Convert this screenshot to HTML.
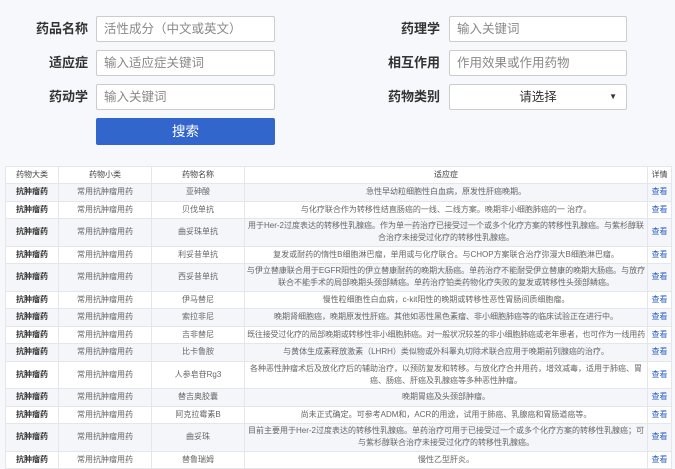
<!DOCTYPE html>
<html><head><meta charset="utf-8"><style>
*{margin:0;padding:0;box-sizing:border-box}
body{width:675px;height:469px;overflow:hidden;background:#f6f8fb;font-family:"Liberation Sans","Noto Sans CJK SC",sans-serif;position:relative}
.lb{position:absolute;font-size:13px;font-weight:bold;color:#333;text-align:right;width:90px;line-height:26px}
.in{position:absolute;height:26px;background:#fff;border:1px solid #ccc;border-radius:2px;font-size:12.5px;color:#888;line-height:24px;padding-left:7px}
.btn{position:absolute;left:96px;top:118px;width:179px;height:27px;background:#3366cc;border-radius:2px;color:#fff;font-size:13.5px;text-align:center;line-height:27px}
table{position:absolute;left:5px;top:166px;width:666px;border-collapse:collapse;table-layout:fixed;background:#fff;font-size:8px;color:#666}
td,th{border:1px solid #e3e6ea;text-align:center;line-height:12px;padding:0 1px}
th{font-weight:normal;color:#444;height:17px}
tr.s{height:17.5px}tr.t{height:27.5px}
tbody tr:nth-child(odd){background:#f4f6f9}
td:first-child{font-weight:bold;color:#333}
td:last-child{color:#2a5fc8}
</style></head><body>
<div class="lb" style="left:-2px;top:16px">药品名称</div>
<div class="in" style="left:96px;top:16px;width:179px">活性成分（中文或英文）</div>
<div class="lb" style="left:-2px;top:50px">适应症</div>
<div class="in" style="left:96px;top:50px;width:179px">输入适应症关键词</div>
<div class="lb" style="left:-2px;top:84px">药动学</div>
<div class="in" style="left:96px;top:84px;width:179px">输入关键词</div>
<div class="btn">搜索</div>
<div class="lb" style="left:350px;top:16px">药理学</div>
<div class="in" style="left:449px;top:16px;width:178px">输入关键词</div>
<div class="lb" style="left:350px;top:50px">相互作用</div>
<div class="in" style="left:449px;top:50px;width:178px">作用效果或作用药物</div>
<div class="lb" style="left:350px;top:84px">药物类别</div>
<div class="in" style="left:449px;top:84px;width:178px;color:#333;text-align:center;padding-left:0">请选择<span style="position:absolute;right:9px;top:0;font-size:8px">▼</span></div>
<table>
<colgroup><col style="width:53px"><col style="width:93px"><col style="width:93px"><col style="width:403px"><col style="width:24px"></colgroup>
<thead><tr><th>药物大类</th><th>药物小类</th><th>药物名称</th><th>适应症</th><th>详情</th></tr></thead>
<tbody>
<tr class="s"><td>抗肿瘤药</td><td>常用抗肿瘤用药</td><td>亚砷酸</td><td>急性早幼粒细胞性白血病，原发性肝癌晚期。</td><td>查看</td></tr>
<tr class="s"><td>抗肿瘤药</td><td>常用抗肿瘤用药</td><td>贝伐单抗</td><td>与化疗联合作为转移性结直肠癌的一线、二线方案。晚期非小细胞肺癌的一 治疗。</td><td>查看</td></tr>
<tr class="t"><td>抗肿瘤药</td><td>常用抗肿瘤用药</td><td>曲妥珠单抗</td><td>用于Her-2过度表达的转移性乳腺癌。作为单一药治疗已接受过一个或多个化疗方案的转移性乳腺癌。与紫杉醇联合治疗未接受过化疗的转移性乳腺癌。</td><td>查看</td></tr>
<tr class="s"><td>抗肿瘤药</td><td>常用抗肿瘤用药</td><td>利妥昔单抗</td><td>复发或耐药的惰性B细胞淋巴瘤，单用或与化疗联合。与CHOP方案联合治疗弥漫大B细胞淋巴瘤。</td><td>查看</td></tr>
<tr class="t"><td>抗肿瘤药</td><td>常用抗肿瘤用药</td><td>西妥昔单抗</td><td>与伊立替康联合用于EGFR阳性的伊立替康耐药的晚期大肠癌。单药治疗不能耐受伊立替康的晚期大肠癌。与放疗联合不能手术的局部晚期头颈部鳞癌。单药治疗铂类药物化疗失败的复发或转移性头颈部鳞癌。</td><td>查看</td></tr>
<tr class="s"><td>抗肿瘤药</td><td>常用抗肿瘤用药</td><td>伊马替尼</td><td>慢性粒细胞性白血病，c-kit阳性的晚期或转移性恶性胃肠间质细胞瘤。</td><td>查看</td></tr>
<tr class="s"><td>抗肿瘤药</td><td>常用抗肿瘤用药</td><td>索拉非尼</td><td>晚期肾细胞癌，晚期原发性肝癌。其他如恶性黑色素瘤、非小细胞肺癌等的临床试验正在进行中。</td><td>查看</td></tr>
<tr class="s"><td>抗肿瘤药</td><td>常用抗肿瘤用药</td><td>吉非替尼</td><td style="letter-spacing:-0.2px">既往接受过化疗的局部晚期或转移性非小细胞肺癌。对一般状况较差的非小细胞肺癌或老年患者，也可作为一线用药</td><td>查看</td></tr>
<tr class="s"><td>抗肿瘤药</td><td>常用抗肿瘤用药</td><td>比卡鲁胺</td><td>与黄体生成素释放激素（LHRH）类似物或外科睾丸切除术联合应用于晚期前列腺癌的治疗。</td><td>查看</td></tr>
<tr class="t"><td>抗肿瘤药</td><td>常用抗肿瘤用药</td><td>人参皂苷Rg3</td><td>各种恶性肿瘤术后及放化疗后的辅助治疗，以预防复发和转移。与放化疗合并用药，增效减毒，适用于肺癌、胃癌、肠癌、肝癌及乳腺癌等多种恶性肿瘤。</td><td>查看</td></tr>
<tr class="s"><td>抗肿瘤药</td><td>常用抗肿瘤用药</td><td>替吉奥胶囊</td><td>晚期胃癌及头颈部肿瘤。</td><td>查看</td></tr>
<tr class="s"><td>抗肿瘤药</td><td>常用抗肿瘤用药</td><td>阿克拉霉素B</td><td>尚未正式确定。可参考ADM和，ACR的用途，试用于肺癌、乳腺癌和胃肠道癌等。</td><td>查看</td></tr>
<tr class="t"><td>抗肿瘤药</td><td>常用抗肿瘤用药</td><td>曲妥珠</td><td>目前主要用于Her-2过度表达的转移性乳腺癌。单药治疗可用于已接受过一个或多个化疗方案的转移性乳腺癌；可与紫杉醇联合治疗未接受过化疗的转移性乳腺癌。</td><td>查看</td></tr>
<tr class="s"><td>抗肿瘤药</td><td>常用抗肿瘤用药</td><td>替鲁瑞姆</td><td>慢性乙型肝炎。</td><td>查看</td></tr>
</tbody></table>
</body></html>
